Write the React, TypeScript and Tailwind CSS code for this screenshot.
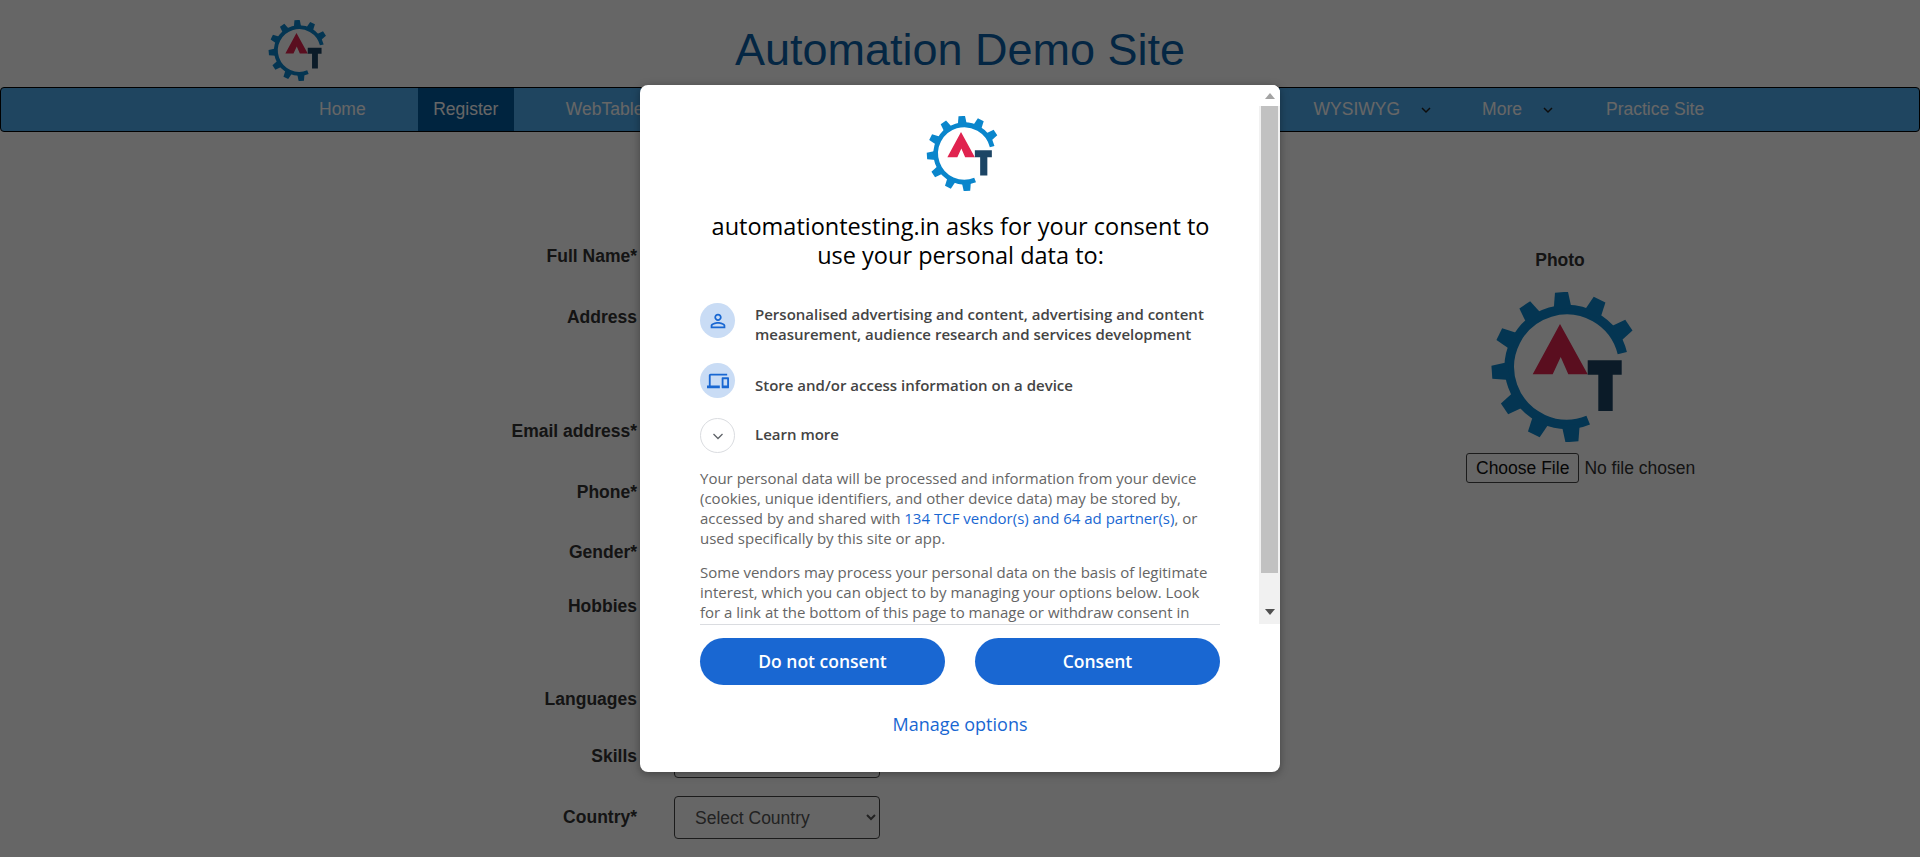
const Logo = ({ className }: { className: string }) => {
  const teeth = [-94, -64, -34, -124, -154, 176, 146, 116, 86];
  return (
    <svg className={className} viewBox="0 0 150 150">
      <path d="M98.2 128.1A57.3 57.3 0 1 1 132.3 61.1" fill="none" stroke="#0a86cc" strokeWidth="9.5" />
      {teeth.map((a) => (
        <polygon
          key={a}
          points="-6.5,-75 6.5,-75 9,-58 -9,-58"
          fill="#0a86cc"
          transform={`translate(76.7 75) rotate(${a + 90})`}
        />
      ))}
      <polygon points="70,32 42.7,82.3 62.7,82.3 70.7,65 78.3,82.3 97.7,82.3" fill="#e0234f" />
      <polygon points="97.7,68.3 131.7,68.3 131.7,82.7 122.7,82.7 122.7,119 108.3,119 108.3,82.7 97.7,82.7" fill="#1c4565" />
    </svg>
  );
};

const Chevron = () => (
  <svg className="ml-5 w-3 h-3 text-[#222]" viewBox="0 0 12 12" fill="none" stroke="currentColor" strokeWidth="1.5">
    <path d="M2 4l4 4 4-4" />
  </svg>
);

const navItems = [
  { label: "Home", cls: "px-4" },
  { label: "Register", cls: "px-[15.5px] bg-[#005a9e]" },
  { label: "WebTable", cls: "px-4" },
  { label: "SwitchTo", cls: "pl-4", menu: true },
  { label: "Widgets", cls: "pl-4", menu: true },
  { label: "Interactions", cls: "pl-4", menu: true },
  { label: "Video", cls: "pl-[14px]", menu: true },
  { label: "WYSIWYG", cls: "pl-4", menu: true },
  { label: "More", cls: "pl-[14px]", menu: true },
  { label: "Practice Site", cls: "px-4" },
];

const formRows = [
  { label: "Full Name*", height: "h-[61px]" },
  { label: "Address", height: "h-[114px]" },
  { label: "Email address*", height: "h-[61px]" },
  { label: "Phone*", height: "h-[60px]" },
  { label: "Gender*", height: "h-[54px]" },
  { label: "Hobbies", height: "h-[93px]" },
  { label: "Languages", height: "h-[57px]" },
  { label: "Skills", height: "h-[61px]", select: "Select Skills" },
  { label: "Country*", height: "h-[60px]", select: "Select Country" },
];

const ConsentDialog = () => (
  <div className="absolute left-[640px] top-[85px] w-[640px] h-[687px] flex flex-col bg-white rounded-lg shadow-[0_2px_8px_rgba(0,0,0,0.35)] overflow-hidden font-['Open_Sans',sans-serif]">
    <div className="flex h-[539px]">
      <div className="flex-1 pl-[60px] pr-[38px] overflow-hidden">
        <div className="flex justify-center pt-[31px]">
          <Logo className="ml-[5px] w-[75px] h-[75px]" />
        </div>
        <h1 className="mt-[21px] text-center text-[23.5px] leading-[29px] text-black">
          automationtesting.in asks for your consent to use your personal data to:
        </h1>
        <div className="mt-[33px] flex items-start">
          <div className="w-[35px] h-[35px] shrink-0 rounded-full bg-[#c9dcf5] flex items-center justify-center">
            <svg className="w-[22px] h-[22px] text-[#1967d2]" viewBox="0 0 24 24" fill="currentColor">
              <path d="M12 5.9c1.16 0 2.1.94 2.1 2.1s-.94 2.1-2.1 2.1S9.9 9.16 9.9 8s.94-2.1 2.1-2.1m0 9c2.97 0 6.1 1.46 6.1 2.1v1.1H5.9V17c0-.64 3.13-2.1 6.1-2.1M12 4C9.79 4 8 5.79 8 8s1.79 4 4 4 4-1.79 4-4-1.79-4-4-4zm0 9c-2.67 0-8 1.34-8 4v3h16v-3c0-2.66-5.33-4-8-4z" />
            </svg>
          </div>
          <p className="ml-[20px] mt-[1px] text-[15px] leading-[20px] font-semibold text-[#444]">
            Personalised advertising and content, advertising and content measurement, audience research and services development
          </p>
        </div>
        <div className="mt-[19px] flex items-start">
          <div className="w-[35px] h-[35px] shrink-0 rounded-full bg-[#c9dcf5] flex items-center justify-center">
            <svg className="w-[22px] h-[22px] text-[#1967d2]" viewBox="0 0 24 24" fill="currentColor">
              <path d="M4 6h18V4H4c-1.1 0-2 .9-2 2v11H0v3h14v-3H4V6zm19 2h-6c-.55 0-1 .45-1 1v10c0 .55.45 1 1 1h6c.55 0 1-.45 1-1V9c0-.55-.45-1-1-1zm-1 9h-4v-7h4v7z" />
            </svg>
          </div>
          <p className="ml-[20px] mt-[12px] text-[15px] leading-[20px] font-semibold text-[#444]">
            Store and/or access information on a device
          </p>
        </div>
        <div className="mt-[20px] flex items-start">
          <div className="w-[35px] h-[35px] shrink-0 rounded-full border border-[#dadce0] flex items-center justify-center">
            <svg className="w-3 h-3 text-[#5f6368]" viewBox="0 0 12 12" fill="none" stroke="currentColor" strokeWidth="1.3">
              <path d="M1.5 4l4.5 4.5L10.5 4" />
            </svg>
          </div>
          <p className="ml-[20px] mt-[6px] text-[15px] leading-[20px] font-semibold text-[#444]">Learn more</p>
        </div>
        <p className="mt-[15px] text-[15px] leading-[20px] text-[#656565]">
          Your personal data will be processed and information from your device (cookies, unique identifiers, and other device data) may be stored by, accessed by and shared with{" "}
          <span className="text-[#1967d2]">134 TCF vendor(s) and 64 ad partner(s)</span>, or used specifically by this site or app.
        </p>
        <p className="mt-[14px] text-[15px] leading-[20px] text-[#656565]">
          Some vendors may process your personal data on the basis of legitimate interest, which you can object to by managing your options below. Look for a link at the bottom of this page to manage or withdraw consent in
        </p>
      </div>
      <div className="w-[21px] shrink-0 flex flex-col bg-[#f1f1f1]">
        <div className="h-[21px] flex items-center justify-center bg-white">
          <div className="w-0 h-0 border-x-[5px] border-x-transparent border-b-[6px] border-b-[#a3a3a3]" />
        </div>
        <div className="h-[467px] mx-[2px] bg-[#c1c1c1]" />
        <div className="flex-1 flex items-end justify-center pb-[9px]">
          <div className="w-0 h-0 border-x-[5px] border-x-transparent border-t-[6px] border-t-[#505050]" />
        </div>
      </div>
    </div>
    <div className="mx-[60px] border-t border-[#dadce0]" />
    <div className="mx-[60px] mt-[13px] flex gap-[30px]">
      <button className="flex-1 h-[47px] rounded-[24px] bg-[#1967d2] text-[17.5px] font-semibold text-white">Do not consent</button>
      <button className="flex-1 h-[47px] rounded-[24px] bg-[#1967d2] text-[17.5px] font-semibold text-white">Consent</button>
    </div>
    <p className="mt-[27px] text-center text-[18px] leading-[24px] font-medium text-[#1967d2]">Manage options</p>
  </div>
);

export default function App() {
  return (
    <div className="relative h-[857px] overflow-hidden bg-white font-['Liberation_Sans',Arial,sans-serif] text-[17.5px] text-[#333]">
      <header className="relative h-[87px] flex items-center justify-center">
        <Logo className="absolute left-[268px] top-[20px] w-[61px] h-[61px]" />
        <h1 className="text-[45px] text-[#0a5fa8] pt-[13px]">Automation Demo Site</h1>
      </header>
      <nav className="h-[45px] flex items-stretch gap-9 pl-[302px] bg-[#4fadf0] border border-black rounded text-white">
        {navItems.map((item) => (
          <div key={item.label} className={`flex items-center ${item.cls}`}>
            {item.label}
            {item.menu && <Chevron />}
          </div>
        ))}
      </nav>
      <main className="flex mt-[114px]">
        <form className="w-[1300px] flex flex-col">
          {formRows.map((row) => (
            <div key={row.label} className={`${row.height} flex items-start`}>
              <label className="w-[637px] text-right font-bold leading-[20px] h-[20px]">{row.label}</label>
              {row.select && (
                <select className="ml-[37px] -mt-[11px] w-[206px] h-[43px] px-[16px] rounded border border-[#444] text-[#555] bg-transparent">
                  <option>{row.select}</option>
                </select>
              )}
            </div>
          ))}
        </form>
        <aside className="w-[520px] mt-[4px] flex flex-col items-center">
          <label className="font-bold leading-[20px]">Photo</label>
          <Logo className="mt-[22px] ml-[10px] w-[150px] h-[150px]" />
          <div className="mt-[11px] flex items-center self-start ml-[166px]">
            <button className="h-[30px] px-[9px] rounded-[3px] border border-[#444] text-[#111] leading-[20px]">Choose File</button>
            <span className="ml-[5px] whitespace-nowrap">No file chosen</span>
          </div>
        </aside>
      </main>
      <div className="absolute inset-0 bg-[rgba(0,0,0,0.6)]" />
      <ConsentDialog />
    </div>
  );
}
